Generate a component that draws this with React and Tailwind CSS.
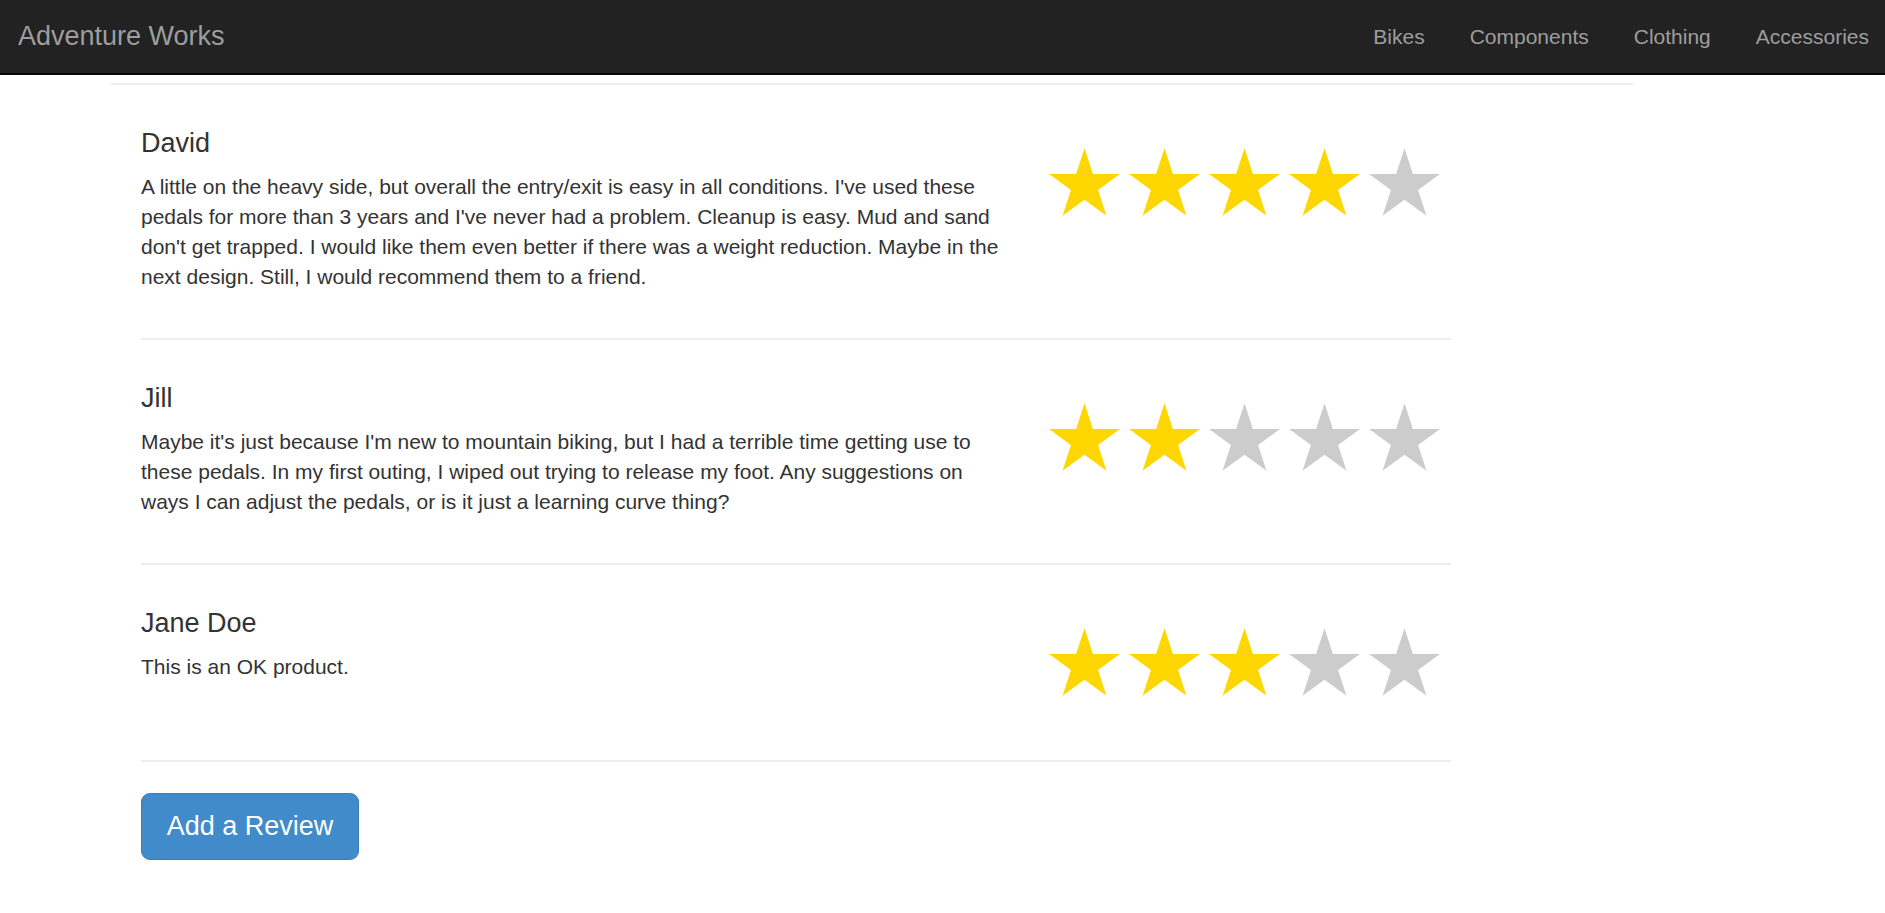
import React from 'react';

const reviews = [
    {
        name: 'David',
        rating: 4,
        text: "A little on the heavy side, but overall the entry/exit is easy in all conditions. I've used these pedals for more than 3 years and I've never had a problem. Cleanup is easy. Mud and sand don't get trapped. I would like them even better if there was a weight reduction. Maybe in the next design. Still, I would recommend them to a friend.",
    },
    {
        name: 'Jill',
        rating: 2,
        text: "Maybe it's just because I'm new to mountain biking, but I had a terrible time getting use to these pedals. In my first outing, I wiped out trying to release my foot. Any suggestions on ways I can adjust the pedals, or is it just a learning curve thing?",
    },
    {
        name: 'Jane Doe',
        rating: 3,
        text: 'This is an OK product.',
    },
];

const navLinks = ['Bikes', 'Components', 'Clothing', 'Accessories'];

const Star = ({ filled }) => (
    <svg viewBox="0 0 95.1 90.45" className="w-[71px] h-[68px] block">
        <polygon
            points="47.55,0 58.78,34.55 95.1,34.55 65.72,55.9 76.94,90.45 47.55,69.1 18.16,90.45 29.38,55.9 0,34.55 36.32,34.55"
            fill={filled ? '#FFD700' : '#CCCCCC'}
        />
    </svg>
);

const Review = ({ review }) => (
    <div className="pt-[43px]">
        <div className="flex items-start">
            {/* Name + comment */}
            <div className="w-[858px]">
                <h4 className="text-[27px] leading-[30px] font-medium">{review.name}</h4>
                <p className="mt-[14px] text-[21px] leading-[30px]">{review.text}</p>
            </div>

            {/* Rating */}
            <div className="ml-[50px] pt-[20px] pb-[18px] flex gap-[9px]">
                {[1, 2, 3, 4, 5].map((n) => (
                    <Star key={n} filled={n <= review.rating} />
                ))}
            </div>
        </div>
        <div className="mt-[46px] h-[2px] bg-[#eeeeee]" />
    </div>
);

const App = () => {
    return (
        <div className="min-h-screen bg-white text-[#333333] font-['Liberation_Sans',Arial,sans-serif]">
            {/* Navbar */}
            <nav className="h-[75px] bg-[#222222] border-b-2 border-[#080808] flex items-center justify-between">
                <a href="#" className="pl-[18px] text-[27px] text-[#9d9d9d]">Adventure Works</a>
                <ul className="flex gap-[45px] pr-[16px] text-[21px] text-[#9d9d9d]">
                    {navLinks.map((link) => (
                        <li key={link}><a href="#">{link}</a></li>
                    ))}
                </ul>
            </nav>

            <div className="mt-[8px] ml-[111px] w-[1522px] h-[2px] bg-[#eeeeee]" />

            <div className="ml-[141px] w-[1310px] pb-[50px]">
                {reviews.map((r) => (
                    <Review key={r.name} review={r} />
                ))}

                <button type="button" className="mt-[31px] w-[218px] h-[67px] rounded-[9px] bg-[#428bca] border border-[#357ebd] text-white text-[27px]">
                    Add a Review
                </button>
            </div>
        </div>
    );
};

export default App;
